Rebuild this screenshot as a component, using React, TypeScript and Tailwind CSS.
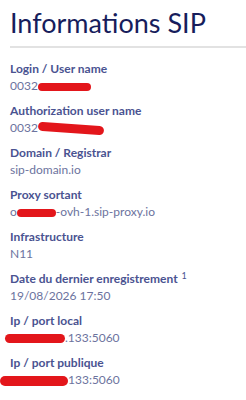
const rows = [
  { label: "Login / User name", value: <>0032<Mark w={53} h={8} /></> },
  { label: "Authorization user name", value: <>0032<Mark w={66} h={9} rot={4} /></> },
  { label: "Domain / Registrar", value: <>sip-domain.io</> },
  { label: "Proxy sortant", value: <>o<Mark w={39} h={8} />-ovh-1.sip-proxy.io</> },
  { label: "Infrastructure", value: <>N11</> },
  { label: "Date du dernier enregistrement", sup: "1", value: <>19/08/2026 17:50</> },
  { label: "Ip / port local", value: <><Mark w={60} h={9} ml={-5} />.133:5060</> },
  { label: "Ip / port publique", value: <><Mark w={68} h={10} ml={-10} />133:5060</> },
];

function Mark({ w, h, ml = 0, rot = 0 }: { w: number; h: number; ml?: number; rot?: number }) {
  return (
    <span
      className="inline-block rounded-full bg-[#e3161b] align-middle"
      style={{ width: w, height: h, marginLeft: ml, transform: `rotate(${rot}deg)` }}
    />
  );
}

export default function App() {
  return (
    <div className="w-[246px] h-[400px] overflow-hidden bg-white pl-[10px] pt-[5px] font-['Lato','Open_Sans',sans-serif]">
      <h1 className="text-[27px] leading-[35px] text-[#171d5c] font-normal">Informations SIP</h1>
      <div className="h-[2px] bg-[#e2e2e2] mt-[6px] mb-[12px]" />
      <dl>
        {rows.map((r, i) => (
          <div key={i} className="mb-2">
            <dt className="text-[12px] leading-[17px] font-bold text-[#4a5391]">
              {r.label}
              {r.sup && <sup className="ml-1 text-[9px] font-normal">{r.sup}</sup>}
            </dt>
            <dd className="text-[12px] leading-[17px] text-[#6c739e] whitespace-nowrap">{r.value}</dd>
          </div>
        ))}
      </dl>
    </div>
  );
}
